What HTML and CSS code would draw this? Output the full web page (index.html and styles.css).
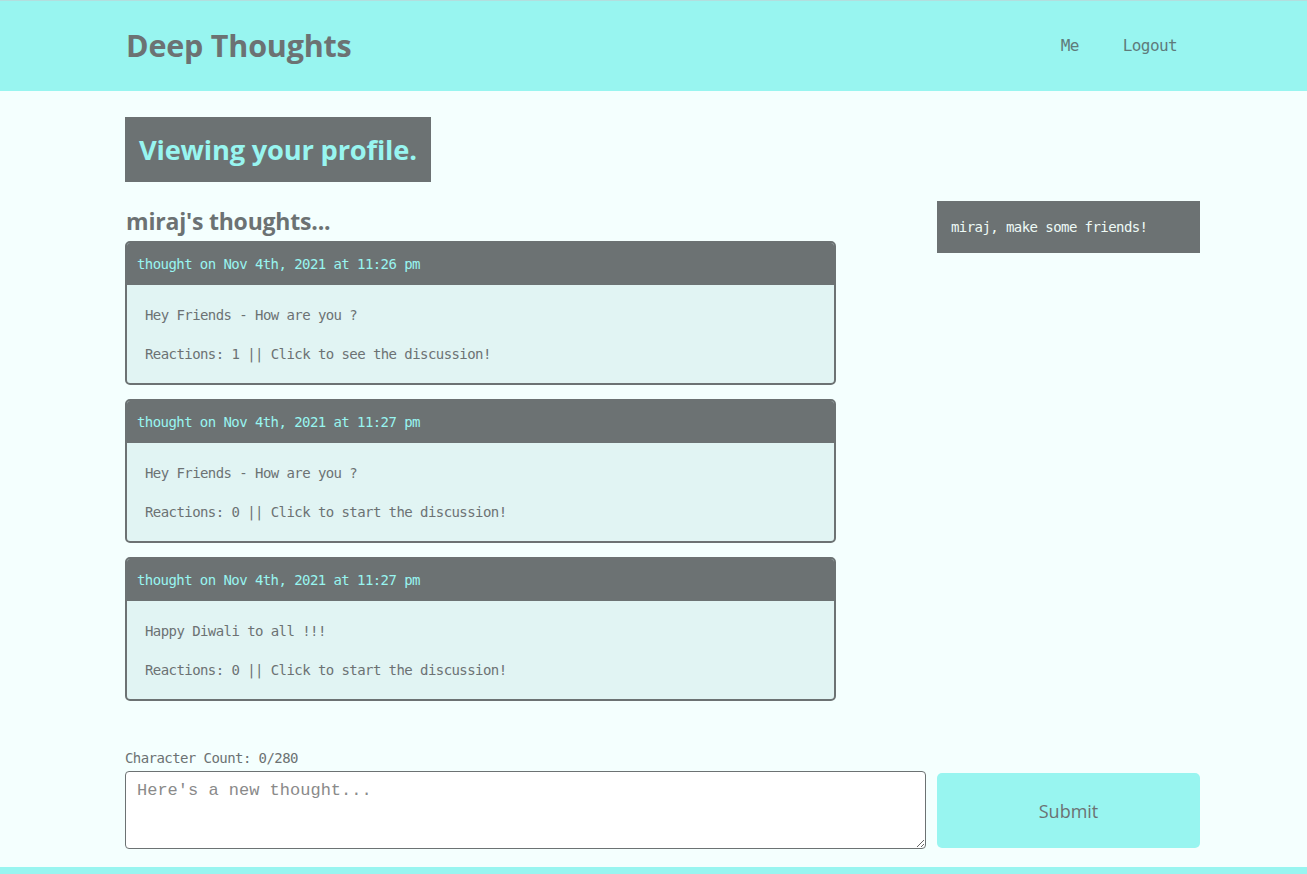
FILE: index.html
```html
<!DOCTYPE html>
<html lang="en">
<head>
<meta charset="utf-8">
<title>Deep Thoughts</title>
<link rel="stylesheet" href="styles.css">
</head>
<body>
<header class="site-header">
  <div class="container header-inner">
    <h1 class="brand">Deep Thoughts</h1>
    <nav class="nav">
      <a href="#" class="nav-link">Me</a>
      <a href="#" class="nav-link">Logout</a>
    </nav>
  </div>
</header>
<main class="container main">
  <div class="banner"><h2 class="banner-title">Viewing your profile.</h2></div>
  <div class="row">
    <section class="thoughts">
      <h3 class="thoughts-title">miraj's thoughts...</h3>
      <div class="card">
        <div class="card-header">thought on Nov 4th, 2021 at 11:26 pm</div>
        <div class="card-body">
          <p>Hey Friends - How are you ?</p>
          <p>Reactions: 1 || Click to see the discussion!</p>
        </div>
      </div>
      <div class="card">
        <div class="card-header">thought on Nov 4th, 2021 at 11:27 pm</div>
        <div class="card-body">
          <p>Hey Friends - How are you ?</p>
          <p>Reactions: 0 || Click to start the discussion!</p>
        </div>
      </div>
      <div class="card">
        <div class="card-header">thought on Nov 4th, 2021 at 11:27 pm</div>
        <div class="card-body">
          <p>Happy Diwali to all !!!</p>
          <p>Reactions: 0 || Click to start the discussion!</p>
        </div>
      </div>
    </section>
    <aside class="friends">
      <div class="friends-box">miraj, make some friends!</div>
    </aside>
  </div>
  <form class="thought-form">
    <p class="char-count">Character Count: 0/280</p>
    <div class="form-row">
      <textarea class="thought-input" placeholder="Here's a new thought..."></textarea>
      <button type="button" class="submit-btn">Submit</button>
    </div>
  </form>
</main>
<footer class="site-footer"></footer>
</body>
</html>
```
FILE: styles.css
```css
* { box-sizing: border-box; }
body {
  margin: 0;
  background: #f4fffe;
  color: #6c7273;
  font-family: "DejaVu Sans Mono", monospace;
}
.container {
  width: 1075px;
  margin-left: 125px;
}
.site-header {
  background: #98f5f0;
  border-top: 1px solid #b3dede;
  height: 91px;
}
.header-inner {
  height: 90px;
  display: flex;
  align-items: center;
  justify-content: space-between;
}
.brand {
  margin: 0 0 2px 1px;
  font-family: "Open Sans", sans-serif;
  font-weight: 700;
  font-size: 30.5px;
  color: #6c7273;
  letter-spacing: -0.2px;
}
.nav {
  display: flex;
  gap: 44px;
  padding-right: 23px;
  margin-bottom: 2px;
}
.nav-link {
  font-family: "DejaVu Sans Mono", monospace;
  font-size: 16px;
  letter-spacing: -0.6px;
  color: #5f7b7b;
  text-decoration: none;
}
.main { padding-top: 26px; }
.banner {
  display: inline-block;
  background: #6c7273;
  padding: 0 14px;
  height: 65px;
}
.banner-title {
  margin: 0;
  line-height: 65px;
  font-family: "Open Sans", sans-serif;
  font-weight: 700;
  font-size: 27.3px;
  color: #98f5f0;
  letter-spacing: -0.2px;
}
.row {
  display: flex;
  justify-content: space-between;
  margin-top: 19px;
}
.thoughts { width: 711px; }
.thoughts-title {
  margin: 0;
  height: 40px;
  line-height: 40px;
  padding-left: 1px;
  font-family: "Open Sans", sans-serif;
  font-weight: 700;
  font-size: 23px;
  color: #6c7273;
  letter-spacing: -0.2px;
}
.card {
  border: 2px solid #6c7273;
  border-radius: 5px;
  background: #e1f4f3;
  margin-bottom: 14px;
  overflow: hidden;
}
.card-header {
  background: #6c7273;
  height: 42px;
  line-height: 42px;
  padding-left: 10px;
  font-size: 14px;
  letter-spacing: -0.57px;
  color: #98f5f0;
}
.card-body {
  padding: 20px 18px 19px;
  font-size: 14px;
  letter-spacing: -0.57px;
  color: #6c7273;
}
.card-body p {
  margin: 0 0 19px;
  line-height: 20px;
}
.card-body p:last-child { margin-bottom: 0; }
.friends { width: 263px; }
.friends-box {
  background: #6c7273;
  color: #eefaf6;
  height: 52px;
  line-height: 52px;
  padding-left: 14px;
  font-size: 14px;
  letter-spacing: -0.57px;
}
.thought-form { margin-top: 33px; }
.char-count {
  margin: 0 0 3px;
  font-size: 14px;
  letter-spacing: -0.57px;
  line-height: 20px;
  color: #6c7273;
}
.form-row {
  display: flex;
  justify-content: space-between;
  align-items: flex-start;
}
.thought-input {
  width: 801px;
  height: 78px;
  border: 1px solid #6c7273;
  border-radius: 4px;
  background: #fff;
  padding: 9px 11px;
  font-family: "Liberation Mono", monospace;
  font-size: 17px;
  color: #333;
  resize: vertical;
}
.thought-input::placeholder { color: #8a8a8a; }
.submit-btn {
  width: 263px;
  height: 75px;
  margin-top: 2px;
  border: none;
  border-radius: 5px;
  background: #98f5f0;
  color: #6c7273;
  font-family: "Open Sans", sans-serif;
  font-size: 18px;
  padding-top: 2px;
}
.site-footer {
  margin-top: 18px;
  height: 60px;
  background: #98f5f0;
}
```
